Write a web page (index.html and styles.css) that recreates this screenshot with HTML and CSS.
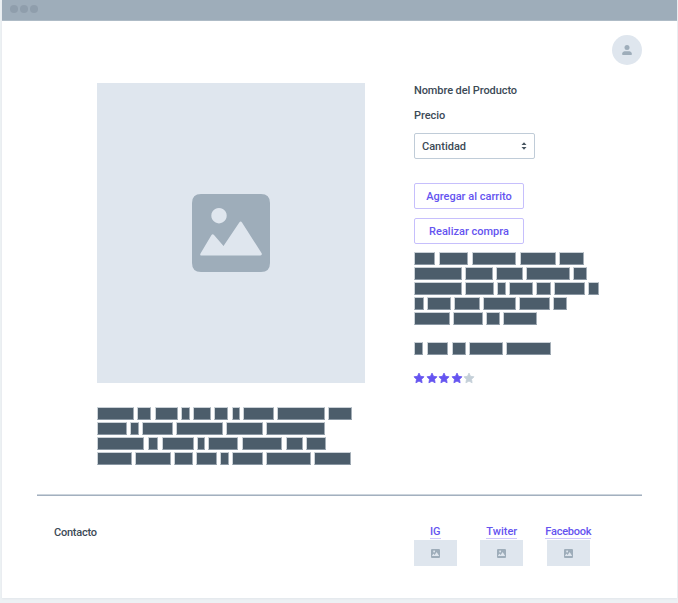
FILE: index.html
```html
<!DOCTYPE html>
<html lang="es">
<head>
<meta charset="utf-8">
<title>Producto</title>
<link rel="stylesheet" href="styles.css">
</head>
<body>
<svg class="defs" aria-hidden="true">
  <symbol id="picture" viewBox="0 0 78 78">
    <path fill="#9eadba" fill-rule="evenodd" d="M9 0H69Q78 0 78 9V69Q78 78 69 78H9Q0 78 0 69V9Q0 0 9 0ZM27 14a7.7 7.7 0 1 0 .01 0ZM9 61.5H68.500Q70.500 61 69.500 59L50 28.500Q48.700 26.500 47.300 28.500L31.500 52L22 41Q20.700 39.500 19.500 41L8.500 59.500Q7.700 61.500 9 61.500Z"/>
  </symbol>
  <symbol id="star" viewBox="0 0 12 12">
    <path stroke-linejoin="round" d="M6 1.100L7.500 4.300L11 4.800L8.500 7.300L9.100 10.800L6 9.100L2.900 10.800L3.500 7.300L1 4.800L4.500 4.300Z"/>
  </symbol>
</svg>
<div class="window">
  <header class="bar"><i></i><i></i><i></i></header>
  <div class="user">
    <div class="avatar"><svg width="10" height="10" viewBox="0 0 10 10"><circle cx="5" cy="2.600" r="2.500"/><path d="M.3 10V8.300Q.3 6.500 2.500 6.200H7.500Q9.700 6.500 9.700 8.300V10Z"/></svg></div>
  </div>
  <main class="product">
    <section class="gallery">
      <div class="photo"><svg width="78" height="78"><use href="#picture"/></svg></div>
      <div class="words">
        <p><b style="--w:110"></b><b style="--w:42"></b><b style="--w:70"></b><b style="--w:26"></b><b style="--w:53"></b><b style="--w:42"></b><b style="--w:25"></b><b style="--w:92"></b><b style="--w:142"></b><b style="--w:72"></b></p>
        <p><b style="--w:89"></b><b style="--w:25"></b><b style="--w:92"></b><b style="--w:140"></b><b style="--w:110"></b><b style="--w:178"></b></p>
        <p><b style="--w:141"></b><b style="--w:32"></b><b style="--w:96"></b><b style="--w:24"></b><b style="--w:90"></b><b style="--w:122"></b><b style="--w:52"></b><b style="--w:58"></b></p>
        <p><b style="--w:104"></b><b style="--w:107"></b><b style="--w:56"></b><b style="--w:62"></b><b style="--w:26"></b><b style="--w:91"></b><b style="--w:134"></b><b style="--w:111"></b></p>
      </div>
    </section>
    <section class="details">
      <h1><span class="name">Nombre del Producto</span></h1>
      <div class="price">Precio</div>
      <div class="select"><span>Cantidad</span><svg width="6" height="8" viewBox="0 0 6 8"><path d="M.5 3L3 .2L5.500 3ZM.5 5L3 7.800L5.500 5Z"/></svg></div>
      <button class="add">Agregar al carrito</button>
      <button class="buy">Realizar compra</button>
      <div class="words">
        <p><b style="--w:63"></b><b style="--w:89"></b><b style="--w:134"></b><b style="--w:109"></b><b style="--w:75"></b></p>
        <p><b style="--w:142"></b><b style="--w:84"></b><b style="--w:80"></b><b style="--w:130"></b><b style="--w:42"></b></p>
        <p><b style="--w:142"></b><b style="--w:87"></b><b style="--w:25"></b><b style="--w:71"></b><b style="--w:45"></b><b style="--w:91"></b><b style="--w:33"></b></p>
        <p><b style="--w:29"></b><b style="--w:70"></b><b style="--w:78"></b><b style="--w:98"></b><b style="--w:92"></b><b style="--w:42"></b></p>
        <p><b style="--w:106"></b><b style="--w:90"></b><b style="--w:41"></b><b style="--w:102"></b></p>
        <p></p>
        <p><b style="--w:27"></b><b style="--w:65"></b><b style="--w:42"></b><b style="--w:102"></b><b style="--w:135"></b></p>
      </div>
      <div class="stars"><svg><use href="#star"/></svg><svg><use href="#star"/></svg><svg><use href="#star"/></svg><svg><use href="#star"/></svg><svg class="off"><use href="#star"/></svg></div>
    </section>
  </main>
  <footer class="footer">
    <span class="contact">Contacto</span>
    <div class="social"><a class="ig">IG</a><div class="thumb"><svg width="9" height="9"><use href="#picture"/></svg></div></div>
    <div class="social"><a class="tw">Twiter</a><div class="thumb"><svg width="9" height="9"><use href="#picture"/></svg></div></div>
    <div class="social"><a class="fb">Facebook</a><div class="thumb"><svg width="9" height="9"><use href="#picture"/></svg></div></div>
  </footer>
</div>
</body>
</html>
```
FILE: styles.css
```css
* { box-sizing: border-box; }
body {
  margin: 0;
  height: 603px;
  overflow: hidden;
  background: #edf1f4;
  color: #3c4a56;
  font: 500 11px/15px Roboto, "Liberation Sans", sans-serif;
}
.defs { display: none; }
.window {
  width: 675px;
  height: 598px;
  margin-left: 2px;
  background: #fff;
  box-shadow: 0 1px 2px #e2e7eb;
}
.bar {
  display: flex;
  gap: 2px;
  height: 21px;
  padding: 5px 7.500px;
  background: #9eadba;
  border-bottom: 1px solid #aebbc6;
}
.bar i { width: 8px; height: 8px; border-radius: 50%; background: #8f9eac; }
.user { display: flex; justify-content: flex-end; padding: 14px 35px 0 0; }
.avatar {
  display: flex;
  align-items: center;
  justify-content: center;
  width: 30px;
  height: 30px;
  border-radius: 50%;
  background: #dfe6ee;
  fill: #9eadba;
}
.product { display: flex; gap: 49px; height: 412px; padding: 18px 0 0 95px; }
.gallery { width: 268px; }
.photo {
  display: flex;
  align-items: center;
  justify-content: center;
  height: 300px;
  background: #dfe6ee;
}
.words p { display: flex; gap: 3.333px; height: 15px; margin: 0; padding-left: .33px; }
.words b {
  flex: none;
  width: calc(var(--w) * 1px / 3);
  height: 13px;
  border: 1px solid #a3adb6;
  border-left-color: #ccd3d8;
  border-top-color: #c9d0d6;
  border-bottom-color: #8996a2;
  background: #4c5d6b;
}
.gallery .words { padding-top: 24px; }
.details { display: flex; flex-direction: column; align-items: flex-start; }
h1 { margin: 0; font: inherit; }
.name { letter-spacing: -.09px; }
.price { margin-top: 10px; letter-spacing: -.03px; }
.select {
  display: flex;
  align-items: center;
  justify-content: space-between;
  width: 121px;
  height: 26px;
  margin-top: 10px;
  padding: 0 7px;
  border: 1px solid #c0ccd8;
  border-radius: 2px;
  fill: #46545f;
}
button {
  width: 110px;
  height: 26px;
  padding: 0;
  border: 1px solid #c6bffc;
  border-radius: 2px;
  background: #fff;
  color: #6554f0;
  font: inherit;
}
.add { margin-top: 24px; }
.buy { margin-top: 9px; }
.details .words { padding-top: 8px; }
.stars { display: flex; gap: .5px; margin: 15px 0 0 -.700px; }
.stars svg { width: 12px; height: 12px; fill: #6554f0; stroke: #6554f0; stroke-width: .8px; }
.stars .off { fill: #c4cfd8; stroke: #c4cfd8; }
.footer {
  display: flex;
  height: 90px;
  margin: 17px 35px 0;
  border-top: 1px solid #ccd4dc;
  box-shadow: inset 0 1px #a3b0bf;
  padding-top: 29px;
}
.contact { width: 365px; padding: 1px 0 0 17px; letter-spacing: -.25px; }
.social { display: flex; flex-direction: column; align-items: center; width: 66.500px; }
.social a { height: 15px; border-bottom: 1px solid #cdc7fb; color: #6554f0; }
.social .fb { letter-spacing: -.25px; }
.thumb {
  display: flex;
  align-items: center;
  justify-content: center;
  width: 43px;
  height: 26px;
  margin-top: 1px;
  background: #dfe6ee;
}
```
